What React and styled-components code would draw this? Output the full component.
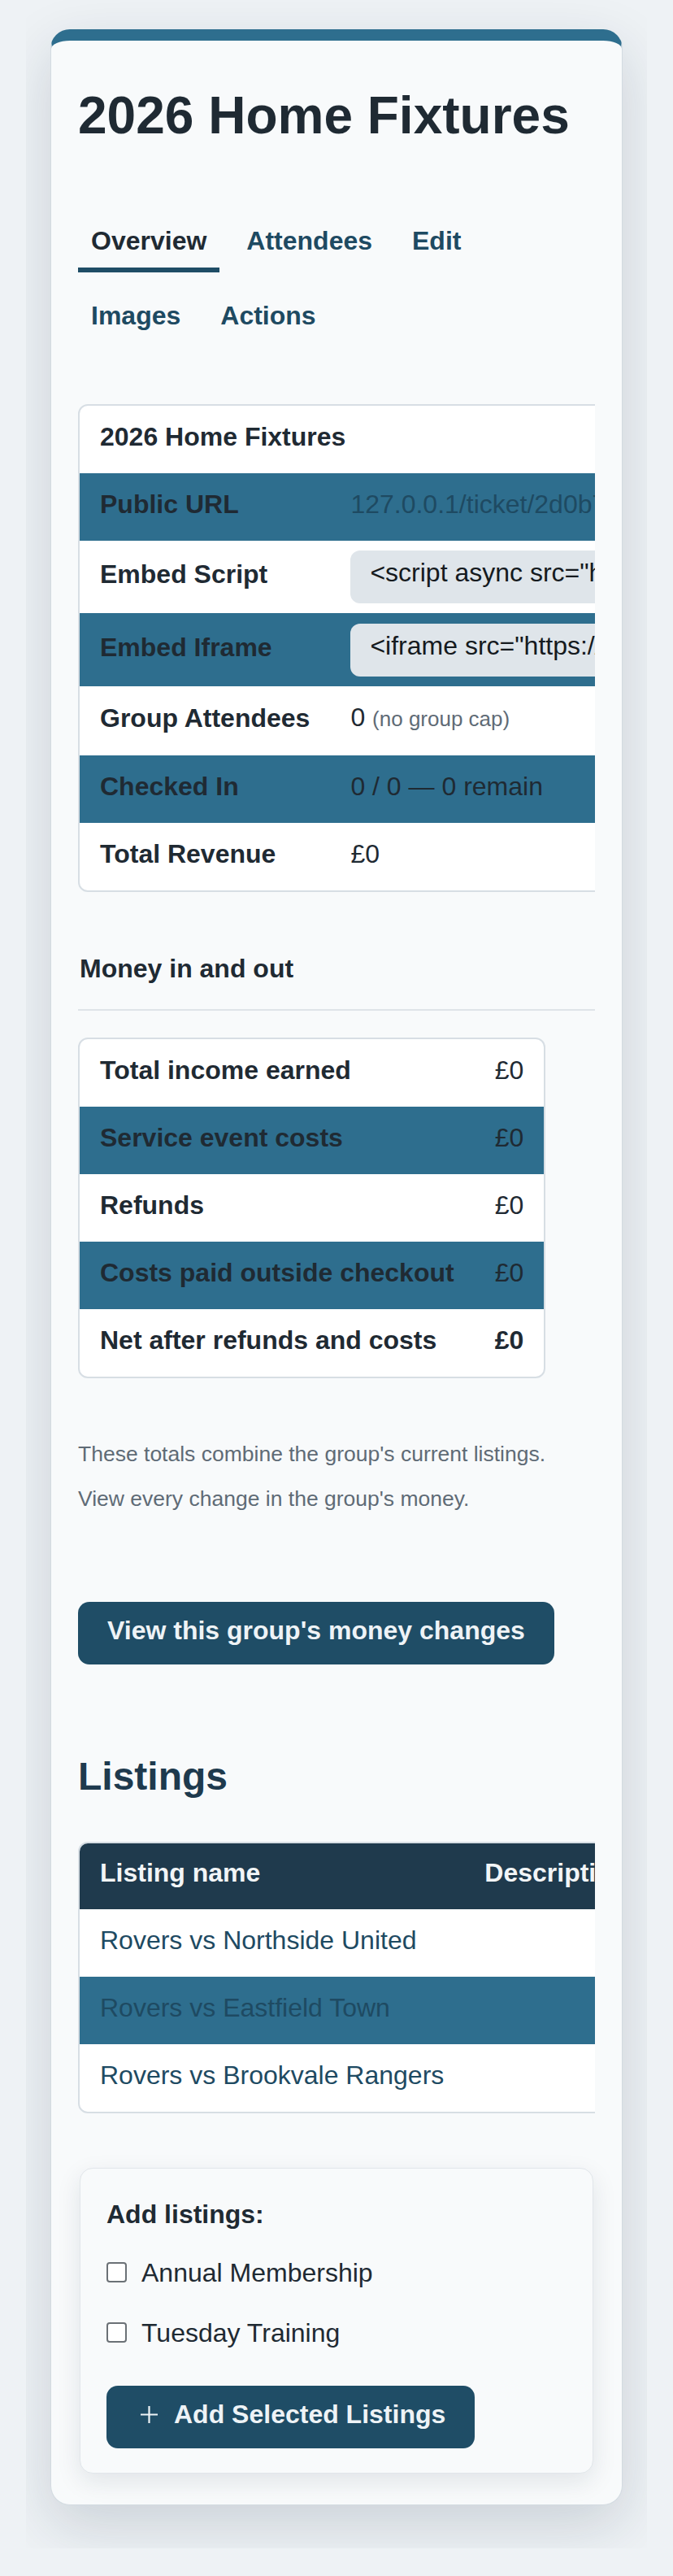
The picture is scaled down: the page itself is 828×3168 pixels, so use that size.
import React from 'react';
import styled, { createGlobalStyle } from 'styled-components';

const GlobalStyle = createGlobalStyle`
  * { box-sizing: border-box; }
  html, body {
    margin: 0;
    padding: 0;
    background: #eef2f5;
    font-family: "Liberation Sans", Arial, sans-serif;
    color: #1f2a33;
  }
`;

const Shell = styled.div`
  width: 764px;
  margin: 0 auto;
  padding: 36px 30px 53px;
  overflow: hidden;
`;

const Card = styled.main`
  display: flex;
  flex-direction: column;
  background: #f8fafb;
  border: 1px solid #d3dbe1;
  border-top: 14px solid #2e6e8e;
  border-radius: 24px;
  padding: 54px 33px 38px;
  box-shadow: 0 24px 70px rgba(20, 40, 60, 0.16);
`;

const Title = styled.h1`
  margin: 0;
  font-size: 64px;
  line-height: 1.2;
  font-weight: 700;
  color: #1f2a33;
`;

const TabBar = styled.nav`
  display: flex;
  flex-wrap: wrap;
  gap: 20px 17px;
  margin-top: 82px;
`;

const Tab = styled.a`
  padding: 14px 16px;
  font-size: 32px;
  line-height: 38px;
  font-weight: 700;
  text-decoration: none;
  color: ${p => (p.$active ? '#1f2a33' : '#1e4a62')};
  border-bottom: 6px solid ${p => (p.$active ? '#1f4d66' : 'transparent')};
`;

const ScrollArea = styled.div`
  display: flex;
  margin-top: ${p => p.$top}px;
  overflow-x: auto;
  scrollbar-width: none;
  &::-webkit-scrollbar { display: none; }
`;

const Frame = styled.div`
  flex: none;
  background: #ffffff;
  border: 2px solid #d7dee4;
  border-radius: 12px;
  overflow: hidden;
`;

const Table = styled.table`
  border-collapse: separate;
  border-spacing: 0;
  font-size: 32px;
  line-height: 40px;
  white-space: nowrap;
  tbody tr:nth-child(even) { background: #2e6e8e; }
`;

const Label = styled.th`
  text-align: left;
  font-weight: 700;
  color: #1f2a33;
  padding: 18px 25px 25px;
  vertical-align: middle;
`;

const Value = styled.td`
  text-align: ${p => (p.$right ? 'right' : 'left')};
  font-weight: ${p => (p.$strong ? 700 : 400)};
  color: #1f2a33;
  padding: ${p => (p.$code ? '12.25px 25px' : '18px 25px 25px')};
  vertical-align: middle;
`;

const LinkText = styled.a`
  color: #1e4a62;
  text-decoration: none;
`;

const CodeBox = styled.code`
  display: inline-block;
  background: #dfe5ea;
  border-radius: 12px;
  padding: 7px 24px 18px;
  font-family: "Liberation Sans", Arial, sans-serif;
  font-size: 32px;
  line-height: 40px;
  color: #151a1e;
`;

const Muted = styled.span`
  font-size: 26px;
  color: #5f6b76;
`;

const SectionHeading = styled.h3`
  margin: 75px 0 0;
  padding: 0 2px 31px;
  font-size: 32px;
  line-height: 38px;
  font-weight: 700;
  color: #1f2a33;
  border-bottom: 2px solid #dfe4e8;
`;

const Note = styled.p`
  margin: ${p => p.$top}px 0 0;
  font-size: 26.5px;
  line-height: 40px;
  color: #5f6b76;
`;

const PrimaryButton = styled.button`
  align-self: flex-start;
  display: inline-flex;
  align-items: center;
  gap: 20px;
  margin-top: ${p => p.$top}px;
  padding: ${p => (p.$icon ? '16px 36px 23px 42px' : '16px 36px 23px')};
  border: none;
  border-radius: 14px;
  background: #1f4d66;
  color: #eef3f6;
  font-family: inherit;
  font-size: 32px;
  line-height: 38px;
  font-weight: 700;
  cursor: pointer;
`;

const ListingsHeading = styled.h2`
  margin: 109px 0 0;
  font-size: 48px;
  line-height: 1.2;
  font-weight: 700;
  color: #1e3a4e;
`;

const HeadCell = styled.th`
  text-align: left;
  font-weight: 700;
  color: #f2f5f7;
  background: #1f3a4d;
  padding: 16px 25px 25px;
`;

const Cell = styled.td`
  padding: 18px 25px 25px;
  color: #1e4a62;
`;

const AddCard = styled.form`
  margin: 66.5px 2px 0;
  padding: 37px 32px 30px;
  background: #f8fafb;
  border: 1px solid #e1e6ea;
  border-radius: 16px;
  box-shadow: 0 10px 30px rgba(20, 40, 60, 0.10);
  display: flex;
  flex-direction: column;
`;

const AddTitle = styled.div`
  font-size: 32px;
  line-height: 38px;
  font-weight: 700;
  color: #1f2a33;
`;

const CheckList = styled.div`
  display: flex;
  flex-direction: column;
  gap: 36px;
  margin-top: 34px;
`;

const CheckRow = styled.label`
  display: flex;
  align-items: center;
  gap: 18px;
  font-size: 32px;
  line-height: 38px;
  color: #1f2a33;
`;

const Check = styled.input`
  appearance: none;
  margin: 0;
  width: 25px;
  height: 25px;
  border: 2px solid #6b7176;
  border-radius: 4px;
  background: #ffffff;
`;

const PlusIcon = () => (
  <svg width="21" height="21" viewBox="0 0 21 21" aria-hidden="true">
    <path d="M0 10.5H21M10.5 0V21" stroke="#eef3f6" strokeWidth="2.2" fill="none" />
  </svg>
);

const details = [
  { label: 'Public URL', value: <LinkText href="#">127.0.0.1/ticket/2d0b7f3a-9c41-4e8a-b6d2-5f1e08a3c7d9</LinkText> },
  { label: 'Embed Script', code: '<script async src="https://127.0.0.1/embed/2d0b7f3a.js"></script>' },
  { label: 'Embed Iframe', code: '<iframe src="https://127.0.0.1/ticket/2d0b7f3a?embed=1" width="100%" height="640"></iframe>' },
  { label: 'Group Attendees', value: <>0 <Muted>(no group cap)</Muted></> },
  { label: 'Checked In', value: '0 / 0 — 0 remain' },
  { label: 'Total Revenue', value: '£0' },
];

const money = [
  ['Total income earned', '£0'],
  ['Service event costs', '£0'],
  ['Refunds', '£0'],
  ['Costs paid outside checkout', '£0'],
  ['Net after refunds and costs', '£0', true],
];

const listings = ['Rovers vs Northside United', 'Rovers vs Eastfield Town', 'Rovers vs Brookvale Rangers'];

export default function App() {
  return (
    <>
      <GlobalStyle />
      <Shell>
        <Card>
          <Title>2026 Home Fixtures</Title>

          <TabBar>
            <Tab href="#" $active>Overview</Tab>
            <Tab href="#">Attendees</Tab>
            <Tab href="#">Edit</Tab>
            <Tab href="#">Images</Tab>
            <Tab href="#">Actions</Tab>
          </TabBar>

          <ScrollArea $top={70}>
            <Frame>
              <Table>
                <tbody>
                  <tr>
                    <Label colSpan={2}>2026 Home Fixtures</Label>
                  </tr>
                  {details.map(d => (
                    <tr key={d.label}>
                      <Label>{d.label}</Label>
                      {d.code ? (
                        <Value $code><CodeBox>{d.code}</CodeBox></Value>
                      ) : (
                        <Value>{d.value}</Value>
                      )}
                    </tr>
                  ))}
                </tbody>
              </Table>
            </Frame>
          </ScrollArea>

          <SectionHeading>Money in and out</SectionHeading>

          <ScrollArea $top={33}>
            <Frame>
              <Table>
                <tbody>
                  {money.map(([label, amount, strong]) => (
                    <tr key={label}>
                      <Label>{label}</Label>
                      <Value $right $strong={strong}>{amount}</Value>
                    </tr>
                  ))}
                </tbody>
              </Table>
            </Frame>
          </ScrollArea>

          <Note $top={73}>These totals combine the group's current listings.</Note>
          <Note $top={15}>View every change in the group's money.</Note>

          <PrimaryButton type="button" $top={107.5}>View this group's money changes</PrimaryButton>

          <ListingsHeading>Listings</ListingsHeading>

          <ScrollArea $top={51.5}>
            <Frame>
              <Table>
                <thead>
                  <tr>
                    <HeadCell>Listing name</HeadCell>
                    <HeadCell>Description</HeadCell>
                    <HeadCell>Price</HeadCell>
                    <HeadCell>Actions</HeadCell>
                  </tr>
                </thead>
                <tbody>
                  {listings.map(name => (
                    <tr key={name}>
                      <Cell><LinkText href="#">{name}</LinkText></Cell>
                      <Cell></Cell>
                      <Cell>£0.00</Cell>
                      <Cell>Remove</Cell>
                    </tr>
                  ))}
                </tbody>
              </Table>
            </Frame>
          </ScrollArea>

          <AddCard onSubmit={e => e.preventDefault()}>
            <AddTitle>Add listings:</AddTitle>
            <CheckList>
              <CheckRow><Check type="checkbox" />Annual Membership</CheckRow>
              <CheckRow><Check type="checkbox" />Tuesday Training</CheckRow>
            </CheckList>
            <PrimaryButton type="submit" $icon $top={46.4}>
              <PlusIcon />
              Add Selected Listings
            </PrimaryButton>
          </AddCard>
        </Card>
      </Shell>
    </>
  );
}
